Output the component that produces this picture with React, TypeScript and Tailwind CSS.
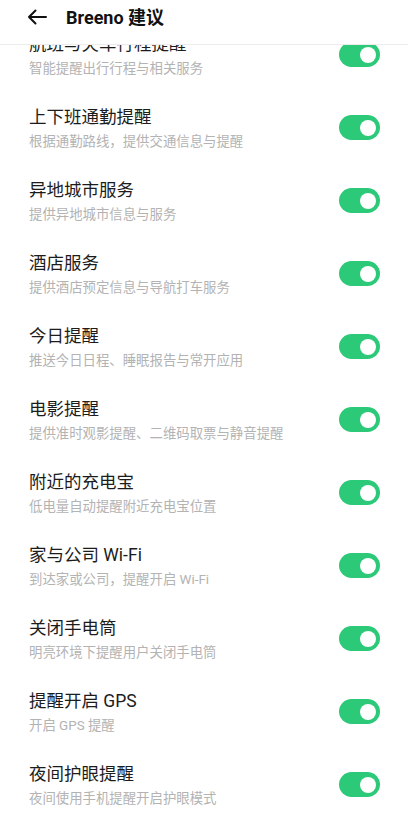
const items = [
	{ title: '航班与火车行程提醒', desc: '智能提醒出行行程与相关服务' },
	{ title: '上下班通勤提醒', desc: '根据通勤路线，提供交通信息与提醒' },
	{ title: '异地城市服务', desc: '提供异地城市信息与服务' },
	{ title: '酒店服务', desc: '提供酒店预定信息与导航打车服务' },
	{ title: '今日提醒', desc: '推送今日日程、睡眠报告与常开应用' },
	{ title: '电影提醒', desc: '提供准时观影提醒、二维码取票与静音提醒' },
	{ title: '附近的充电宝', desc: '低电量自动提醒附近充电宝位置' },
	{ title: '家与公司 Wi-Fi', desc: '到达家或公司，提醒开启 Wi-Fi' },
	{ title: '关闭手电筒', desc: '明亮环境下提醒用户关闭手电筒' },
	{ title: '提醒开启 GPS', desc: '开启 GPS 提醒' },
	{ title: '夜间护眼提醒', desc: '夜间使用手机提醒开启护眼模式' },
];

const Toggle = () => (
	<div className="flex h-[25px] w-[41px] shrink-0 items-center justify-end rounded-full bg-[#2bc978] pr-[4px]">
		<div className="size-[16px] rounded-full bg-white" />
	</div>
);

const SettingRow = ({ title, desc }: { title: string; desc: string }) => (
	<div className="flex h-[73px] items-center justify-between pl-[29px] pr-[28px]">
		<div className="flex flex-col">
			<p className="text-[17.5px] leading-[24px] text-[#1c1c1c]">{title}</p>
			<p className="mt-[4px] text-[13.4px] leading-[18px] text-[#b3b3b3]">{desc}</p>
		</div>
		<Toggle />
	</div>
);

export default function App() {
	return (
		<div
			className="relative h-[822px] w-[408px] overflow-hidden bg-white"
			style={{ fontFamily: 'Roboto, "Noto Sans CJK SC", sans-serif' }}
		>
			{/* header sits over the scrolled list */}
			<div className="absolute inset-x-0 top-0 z-10 h-[45px] border-b border-[#ececec] bg-white">
				<div className="flex h-[34px] items-center">
					<svg
						className="ml-[27px]"
						width="20"
						height="16"
						viewBox="0 0 20 16"
						fill="none"
						stroke="#111"
						strokeWidth="2"
						strokeLinecap="round"
						strokeLinejoin="round"
					>
						<path d="M19 8H2M8.5 1.5 2 8l6.5 6.5" />
					</svg>
					<h1 className="ml-[19px] text-[18px] font-bold text-[#111]">Breeno 建议</h1>
				</div>
			</div>

			<div className="pt-[18px]">
				{items.map((item) => (
					<SettingRow key={item.title} title={item.title} desc={item.desc} />
				))}
			</div>
		</div>
	);
}
